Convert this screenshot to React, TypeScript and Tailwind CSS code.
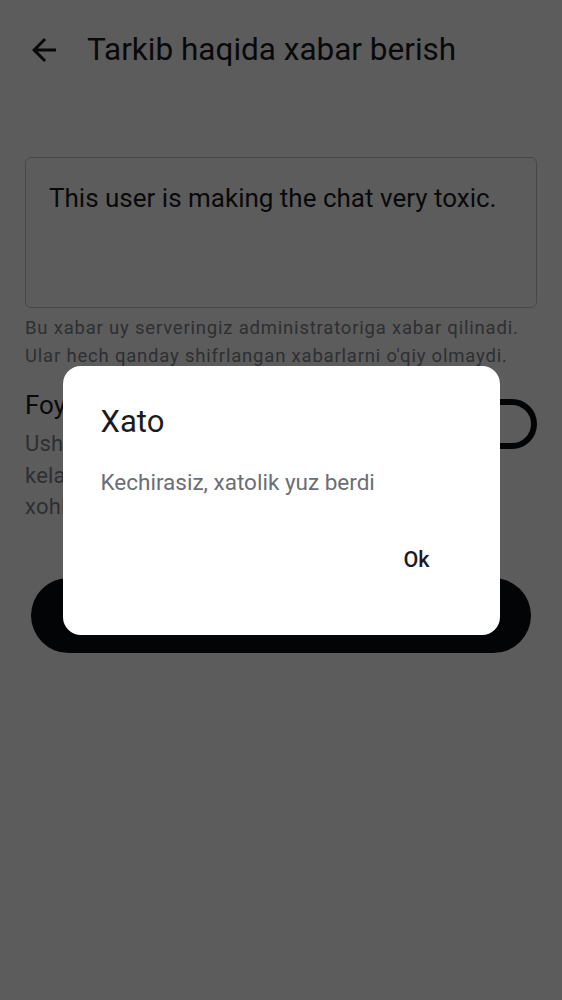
import React from "react";

const BackArrow = () => (
  <svg width="36" height="36" viewBox="0 0 24 24" fill="#1b1b1f">
    <path d="M20 11H7.83l5.59-5.59L12 4l-8 8 8 8 1.41-1.41L7.83 13H20v-2z" />
  </svg>
);

const ErrorDialog = () => (
  <div className="fixed inset-0 flex items-center justify-center bg-black/[0.64]">
    <div className="flex w-[437px] flex-col rounded-[18px] bg-white pb-[61px] pl-[38px] pr-[70px] pt-[38px]">
      <h2 className="text-[31px] leading-[36px] text-[#1b1b1f]">Xato</h2>
      <p className="mt-[28px] text-[22.5px] leading-[28px] text-[#6b6e76]">
        Kechirasiz, xatolik yuz berdi
      </p>
      <div className="mt-[50px] flex justify-end">
        <button className="text-[21.5px] font-medium leading-[28px] text-[#1b1b1f]">
          Ok
        </button>
      </div>
    </div>
  </div>
);

export default function App() {
  return (
    <div
      className="relative min-h-screen bg-white"
      style={{ fontFamily: "Roboto, 'Noto Sans', sans-serif" }}
    >
      <header className="flex h-[100px] items-center gap-[25px] pl-[26px]">
        <BackArrow />
        <h1 className="text-[31.5px] leading-[38px] text-[#1b1b1f]">
          Tarkib haqida xabar berish
        </h1>
      </header>

      <main className="mt-[57px] flex flex-col px-[25px]">
        <div className="h-[151px] rounded-[6px] border-[1.5px] border-[#c4c6cc] px-[23px] pt-[23px]">
          <p className="text-[26px] leading-[34px] text-[#1b1b1f]">
            This user is making the chat very toxic.
          </p>
        </div>
        <p className="mt-[7px] text-[18.5px] leading-[27.5px] tracking-[0.8px] text-[#80838b]">
          Bu xabar uy serveringiz administratoriga xabar qilinadi.
          <br />
          Ular hech qanday shifrlangan xabarlarni o'qiy olmaydi.
        </p>

        <section className="mt-[18px] flex items-start justify-between">
          <div className="flex flex-col">
            <p className="text-[26px] leading-[34px] text-[#1b1b1f]">
              Foydalanuvchini bloklash
            </p>
            <p className="mt-[6px] text-[22px] leading-[31.5px] tracking-[0.2px] text-[#80838b]">
              Ushbu foydalanuvchidan kelgan
              <br />
              kelajakdagi xabarlarni
              <br />
              xohlaysizmi?
            </p>
          </div>
          <div className="mt-[11px] h-[50px] w-[88px] shrink-0 rounded-full border-[6px] border-[#0b0c0e]" />
        </section>

        <button className="mx-[6px] mt-[55px] h-[75px] rounded-full bg-[#0b0c0e] text-[22px] font-medium text-white">
          Xabar berish
        </button>
      </main>

      <ErrorDialog />
    </div>
  );
}
